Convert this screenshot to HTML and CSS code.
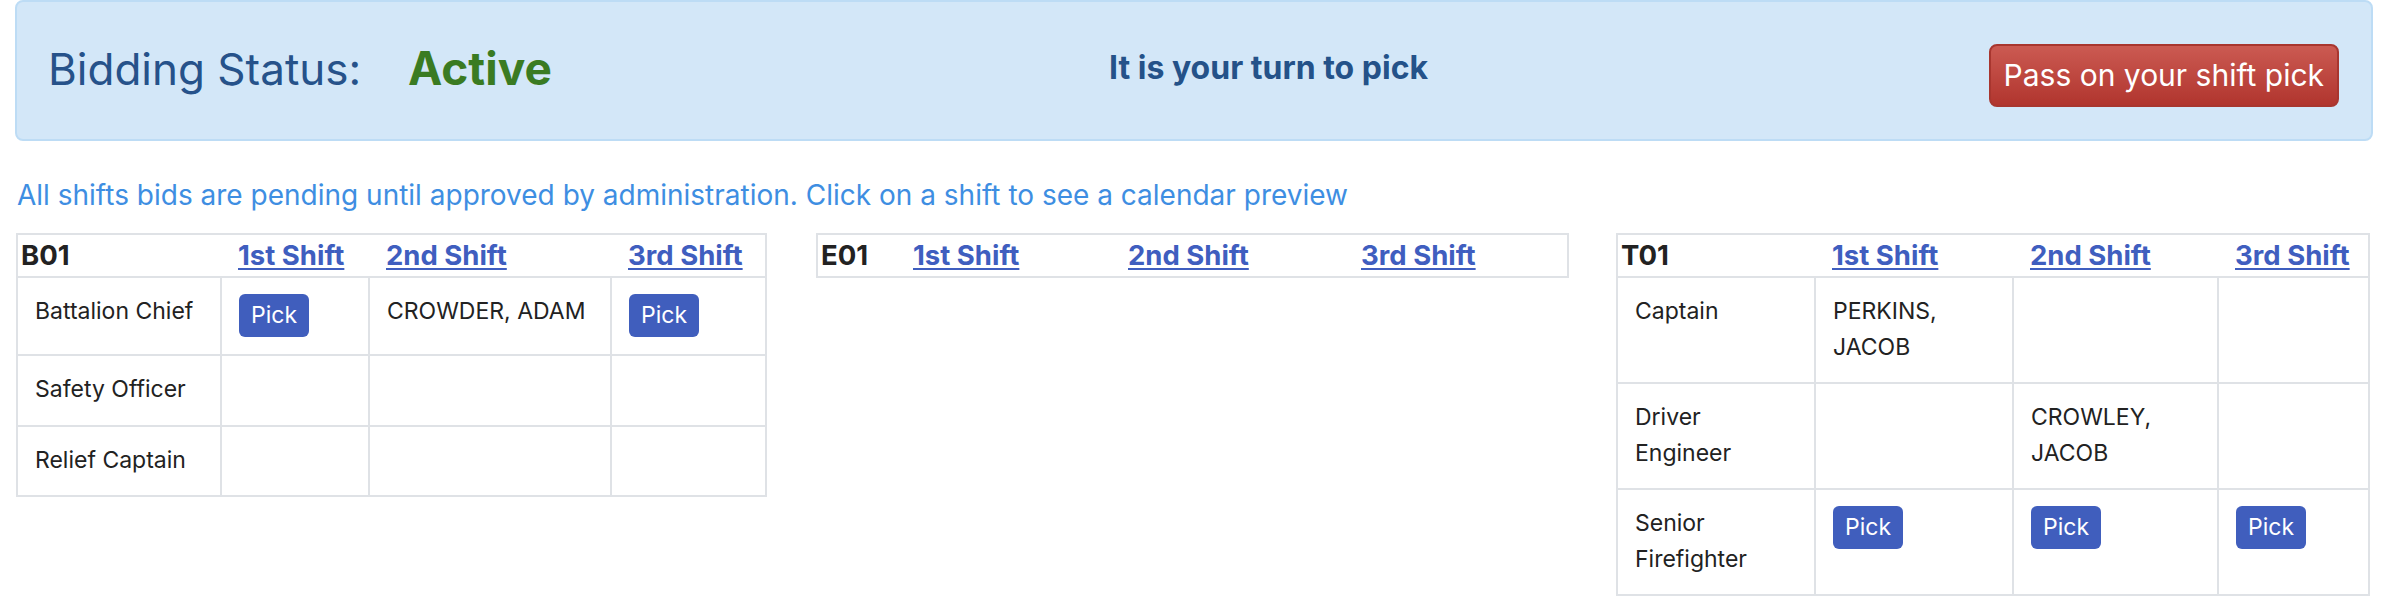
FILE: index.html
```html
<!DOCTYPE html>
<html lang="en">
<head>
<meta charset="utf-8">
<title>Shift Bidding</title>
<link rel="stylesheet" href="styles.css">
</head>
<body>
<div class="alert">
  <h3 class="status"><span class="status-label">Bidding Status:</span><span class="status-value">Active</span></h3>
  <div class="turn">It is your turn to pick</div>
  <button class="btn-pass" type="button">Pass on your shift pick</button>
</div>

<p class="notice">All shifts bids are pending until approved by administration. Click on a shift to see a calendar preview</p>

<div class="stations">
  <table class="shifts shifts-b">
    <thead>
      <tr><th class="unit">B01</th><th><a href="#">1st Shift</a></th><th><a href="#">2nd Shift</a></th><th><a href="#">3rd Shift</a></th></tr>
    </thead>
    <tbody>
      <tr><td>Battalion Chief</td><td><button class="btn-pick" type="button">Pick</button></td><td>CROWDER, ADAM</td><td><button class="btn-pick" type="button">Pick</button></td></tr>
      <tr><td>Safety Officer</td><td></td><td></td><td></td></tr>
      <tr><td>Relief Captain</td><td></td><td></td><td></td></tr>
    </tbody>
  </table>

  <table class="shifts shifts-e">
    <thead>
      <tr><th class="unit">E01</th><th><a href="#">1st Shift</a></th><th><a href="#">2nd Shift</a></th><th><a href="#">3rd Shift</a></th></tr>
    </thead>
  </table>

  <table class="shifts shifts-t">
    <thead>
      <tr><th class="unit">T01</th><th><a href="#">1st Shift</a></th><th><a href="#">2nd Shift</a></th><th><a href="#">3rd Shift</a></th></tr>
    </thead>
    <tbody>
      <tr><td>Captain</td><td>PERKINS,<br>JACOB</td><td></td><td></td></tr>
      <tr><td>Driver<br>Engineer</td><td></td><td>CROWLEY,<br>JACOB</td><td></td></tr>
      <tr><td>Senior<br>Firefighter</td><td><button class="btn-pick" type="button">Pick</button></td><td><button class="btn-pick" type="button">Pick</button></td><td><button class="btn-pick" type="button">Pick</button></td></tr>
    </tbody>
  </table>
</div>
</body>
</html>
```

FILE: styles.css
```css
* { box-sizing: border-box; }

body {
  margin: 0;
  font-family: Inter, "Noto Sans", sans-serif;
  color: #222;
  background: #fff;
}

.alert {
  margin: 0 15px;
  height: 141px;
  background: #d3e7f8;
  border: 2px solid #bddcf5;
  border-radius: 8px;
  display: flex;
  align-items: flex-start;
  padding: 0 32px 0 31px;
}

.status {
  width: 1061px;
  margin: 40px 0 0;
  font-size: 44px;
  line-height: 53px;
  font-weight: 400;
  display: flex;
  align-items: baseline;
}

.status-label {
  width: 360px;
  color: #26528a;
}

.status-value {
  color: #3a7b22;
  font-weight: 700;
  font-size: 46px;
}

.turn {
  margin-top: 47px;
  font-size: 32px;
  line-height: 38px;
  font-weight: 700;
  color: #245289;
}

.btn-pass {
  margin: 42px 0 0 auto;
  height: 63px;
  padding: 0 13px;
  border: 2px solid #a8362f;
  border-radius: 8px;
  background: linear-gradient(#cb5a52, #b1352e);
  color: #fff;
  font-family: inherit;
  font-size: 30px;
  line-height: 59px;
}

.notice {
  margin: 35px 0 0 17px;
  font-size: 28px;
  line-height: 38px;
  color: #3e8ee2;
}

.stations {
  margin: 19px 0 0 16px;
  display: grid;
  grid-template-columns: repeat(3, 751px);
  column-gap: 49px;
  align-items: start;
}

.shifts {
  border-collapse: collapse;
  border: 2px solid #dfe2e6;
  width: 100%;
  table-layout: fixed;
}

.shifts th {
  text-align: left;
  font-size: 27.5px;
  font-weight: 700;
  line-height: 41px;
  padding: 0 0 0 17px;
  border-bottom: 2px solid #dfe2e6;
  white-space: nowrap;
}

.shifts th.unit {
  padding-left: 3px;
}

.shifts th a {
  color: #3f5ebf;
  text-decoration: underline;
  text-underline-offset: 3px;
  text-decoration-thickness: 2px;
}

.shifts td {
  border: 2px solid #dfe2e6;
  padding: 16px 17px 17px;
  font-size: 23px;
  line-height: 35.5px;
  vertical-align: top;
  color: #222;
}

.shifts-b th:nth-child(1) { width: 204px; }
.shifts-b th:nth-child(2) { width: 148px; }
.shifts-b th:nth-child(3) { width: 242px; }
.shifts-b th:nth-child(4) { width: 155px; }

.shifts-e th:nth-child(1) { width: 79px; }
.shifts-e th:nth-child(2) { width: 215px; }
.shifts-e th:nth-child(3) { width: 233px; }
.shifts-e th:nth-child(4) { width: 224px; }

.shifts-t th:nth-child(1) { width: 198px; }
.shifts-t th:nth-child(2) { width: 198px; }
.shifts-t th:nth-child(3) { width: 205px; }
.shifts-t th:nth-child(4) { width: 151px; }

.btn-pick {
  display: block;
  height: 43px;
  padding: 0 12px;
  border: 0;
  border-radius: 6px;
  background: #405ebd;
  color: #fff;
  font-family: inherit;
  font-size: 23px;
  line-height: 43px;
}
```
